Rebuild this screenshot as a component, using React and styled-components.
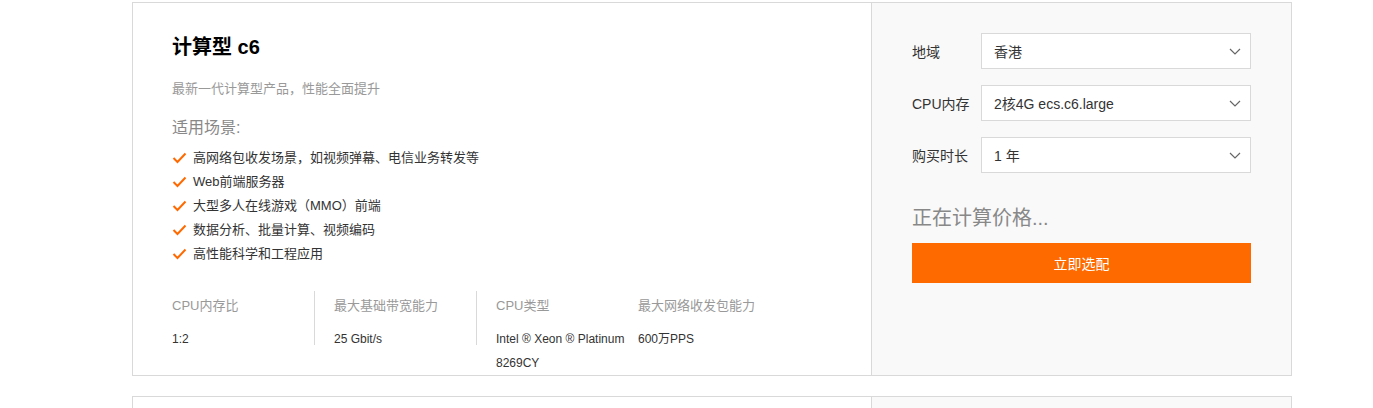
import React from 'react';
import styled, { createGlobalStyle } from 'styled-components';

const GlobalStyle = createGlobalStyle`
  html, body {
    margin: 0;
    padding: 0;
    background: #fff;
    overflow: hidden;
  }
  body {
    font-family: "Liberation Sans", "Noto Sans CJK SC", sans-serif;
    color: #333;
  }
`;

const Page = styled.div`
  padding: 2px 0 0 132px;
`;

const Card = styled.div`
  width: 1160px;
  box-sizing: border-box;
  border: 1px solid #d9d9d9;
  display: flex;
  background: #fff;
  min-height: ${(p) => p.mh || 'auto'};
  & + & {
    margin-top: 20px;
  }
`;

const InfoPanel = styled.div`
  width: 739px;
  box-sizing: border-box;
  padding: 30px 40px 30px 39px;
  border-right: 1px solid #d9d9d9;
`;

const Title = styled.h2`
  margin: 0;
  font-size: 20px;
  line-height: 28px;
  font-weight: bold;
  color: #000;
`;

const Subtitle = styled.p`
  margin: 18px 0 0;
  font-size: 13px;
  line-height: 20px;
  color: #999;
`;

const SceneTitle = styled.div`
  margin-top: 17px;
  font-size: 16px;
  line-height: 24px;
  color: #888;
`;

const SceneList = styled.ul`
  margin: 6px 0 0;
  padding: 0;
  list-style: none;
`;

const SceneItem = styled.li`
  display: flex;
  align-items: center;
  gap: 6px;
  font-size: 13px;
  line-height: 24px;
  color: #333;
`;

const Specs = styled.div`
  margin-top: 25px;
  display: flex;
  height: 54px;
`;

const SpecCol = styled.div`
  width: ${(p) => (p.divider ? '143px' : '142px')};
  box-sizing: border-box;
  margin-right: ${(p) => (p.divider ? '19px' : '0')};
  border-right: ${(p) => (p.divider ? '1px solid #d9d9d9' : 'none')};
  padding-top: 4px;
`;

const SpecLabel = styled.div`
  font-size: 13px;
  line-height: 22px;
  color: #999;
`;

const SpecValue = styled.div`
  margin-top: 10px;
  font-size: 12px;
  line-height: 24px;
  color: #333;
  padding-right: 12px;
`;

const BuyPanel = styled.div`
  flex: 1;
  background: #f9f9f9;
  padding: 30px 40px;
`;

const FieldRow = styled.div`
  display: flex;
  align-items: center;
  & + & {
    margin-top: 16px;
  }
`;

const FieldLabel = styled.div`
  width: 69px;
  font-size: 14px;
  color: #333;
  white-space: nowrap;
`;

const Select = styled.div`
  width: 270px;
  height: 36px;
  box-sizing: border-box;
  border: 1px solid #d9d9d9;
  background: #fff;
  display: flex;
  align-items: center;
  justify-content: space-between;
  padding: 0 9px 0 12px;
  font-size: 14px;
  color: #333;
`;

const Price = styled.div`
  margin-top: 31px;
  font-size: 20px;
  line-height: 28px;
  color: #888;
`;

const BuyButton = styled.button`
  margin-top: 11px;
  width: 339px;
  height: 40px;
  border: none;
  background: #ff6a00;
  color: #fff;
  font-family: inherit;
  font-size: 14px;
  cursor: pointer;
`;

const Check = () => (
  <svg width="15" height="12" viewBox="0 0 15 12">
    <polyline points="1.5,6 5.5,10 13.5,1.5" fill="none" stroke="#ff6a00" strokeWidth="2" />
  </svg>
);

const Chevron = () => (
  <svg width="12" height="7" viewBox="0 0 12 7">
    <polyline points="1,1 6,6 11,1" fill="none" stroke="#666" strokeWidth="1.2" />
  </svg>
);

const product = {
  title: '计算型 c6',
  desc: '最新一代计算型产品，性能全面提升',
  scenes: [
    '高网络包收发场景，如视频弹幕、电信业务转发等',
    'Web前端服务器',
    '大型多人在线游戏（MMO）前端',
    '数据分析、批量计算、视频编码',
    '高性能科学和工程应用',
  ],
  specs: [
    { label: 'CPU内存比', value: '1:2', divider: true },
    { label: '最大基础带宽能力', value: '25 Gbit/s', divider: true },
    { label: 'CPU类型', value: 'Intel ® Xeon ® Platinum 8269CY' },
    { label: '最大网络收发包能力', value: '600万PPS' },
  ],
  fields: [
    { label: '地域', value: '香港' },
    { label: 'CPU内存', value: '2核4G ecs.c6.large' },
    { label: '购买时长', value: '1 年' },
  ],
};

const ProductCard = ({ item }) => (
  <Card>
    <InfoPanel>
      <Title>{item.title}</Title>
      <Subtitle>{item.desc}</Subtitle>
      <SceneTitle>适用场景:</SceneTitle>
      <SceneList>
        {item.scenes.map((s) => (
          <SceneItem key={s}>
            <Check />
            {s}
          </SceneItem>
        ))}
      </SceneList>
      <Specs>
        {item.specs.map((s) => (
          <SpecCol key={s.label} divider={s.divider}>
            <SpecLabel>{s.label}</SpecLabel>
            <SpecValue>{s.value}</SpecValue>
          </SpecCol>
        ))}
      </Specs>
    </InfoPanel>
    <BuyPanel>
      {item.fields.map((f) => (
        <FieldRow key={f.label}>
          <FieldLabel>{f.label}</FieldLabel>
          <Select>
            {f.value}
            <Chevron />
          </Select>
        </FieldRow>
      ))}
      <Price>正在计算价格...</Price>
      <BuyButton>立即选配</BuyButton>
    </BuyPanel>
  </Card>
);

// next card is only peeking in at the bottom edge
const NextCard = () => (
  <Card mh="374px">
    <InfoPanel />
    <BuyPanel />
  </Card>
);

const App = () => (
  <Page>
    <GlobalStyle />
    <ProductCard item={product} />
    <NextCard />
  </Page>
);

export default App;
